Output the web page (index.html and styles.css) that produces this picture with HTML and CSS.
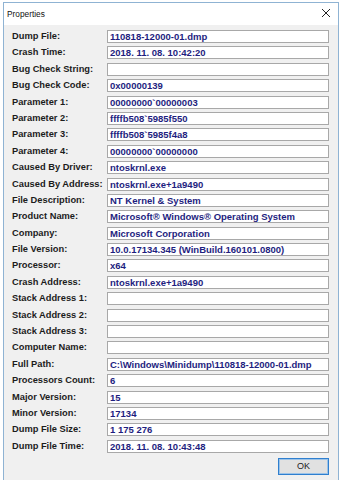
FILE: index.html
```html
<!DOCTYPE html>
<html>
<head>
<meta charset="utf-8">
<link rel="stylesheet" href="styles.css">
</head>
<body>
<div class="window">
  <div class="titlebar">
    <span class="title">Properties</span>
    <svg class="close" width="10" height="10" viewBox="0 0 10 10"><path d="M1 1 L9 9 M9 1 L1 9" stroke="#222" stroke-width="1" fill="none"/></svg>
  </div>
  <div class="content">
    <div class="grid">
      <div class="label">Dump File:</div><div class="field">110818-12000-01.dmp</div>
      <div class="label">Crash Time:</div><div class="field">2018. 11. 08. 10:42:20</div>
      <div class="label">Bug Check String:</div><div class="field"></div>
      <div class="label">Bug Check Code:</div><div class="field">0x00000139</div>
      <div class="label">Parameter 1:</div><div class="field">00000000`00000003</div>
      <div class="label">Parameter 2:</div><div class="field">ffffb508`5985f550</div>
      <div class="label">Parameter 3:</div><div class="field">ffffb508`5985f4a8</div>
      <div class="label">Parameter 4:</div><div class="field">00000000`00000000</div>
      <div class="label">Caused By Driver:</div><div class="field">ntoskrnl.exe</div>
      <div class="label">Caused By Address:</div><div class="field">ntoskrnl.exe+1a9490</div>
      <div class="label">File Description:</div><div class="field">NT Kernel &amp; System</div>
      <div class="label">Product Name:</div><div class="field">Microsoft® Windows® Operating System</div>
      <div class="label">Company:</div><div class="field">Microsoft Corporation</div>
      <div class="label">File Version:</div><div class="field">10.0.17134.345 (WinBuild.160101.0800)</div>
      <div class="label">Processor:</div><div class="field">x64</div>
      <div class="label">Crash Address:</div><div class="field">ntoskrnl.exe+1a9490</div>
      <div class="label">Stack Address 1:</div><div class="field"></div>
      <div class="label">Stack Address 2:</div><div class="field"></div>
      <div class="label">Stack Address 3:</div><div class="field"></div>
      <div class="label">Computer Name:</div><div class="field"></div>
      <div class="label">Full Path:</div><div class="field">C:\Windows\Minidump\110818-12000-01.dmp</div>
      <div class="label">Processors Count:</div><div class="field">6</div>
      <div class="label">Major Version:</div><div class="field">15</div>
      <div class="label">Minor Version:</div><div class="field">17134</div>
      <div class="label">Dump File Size:</div><div class="field">1 175 276</div>
      <div class="label">Dump File Time:</div><div class="field">2018. 11. 08. 10:43:48</div>
    </div>
    <div class="footer">
      <button class="ok">OK</button>
    </div>
  </div>
</div>
</body>
</html>
```
FILE: styles.css
```css
html, body {
  margin: 0;
  padding: 0;
}
body {
  background: #ffffff;
  width: 341px;
  height: 480px;
  overflow: hidden;
  font-family: "Liberation Sans", Arial, sans-serif;
}
.window {
  margin: 2px 0 0 3px;
  width: 334px;
  height: 490px;
  border: 1px solid #8fb3d3;
  background: #f0f0f0;
}
.titlebar {
  height: 22px;
  background: #ffffff;
  display: flex;
  align-items: center;
  justify-content: space-between;
  padding: 0 7px 0 3px;
}
.title {
  font-size: 8.3px;
  color: #111;
  margin-top: -1px;
}
.close {
  margin-top: -2px;
}
.content {
  padding: 5px 9px 0 8px;
}
.grid {
  display: grid;
  grid-template-columns: 95px 1fr;
  grid-auto-rows: 13px;
  row-gap: 3.4px;
}
.label {
  font-weight: bold;
  font-size: 9.3px;
  color: #1c1c1c;
  line-height: 13px;
  white-space: nowrap;
}
.field {
  background: #ffffff;
  border: 1px solid #a8a8a8;
  font-weight: bold;
  font-size: 9.5px;
  color: #1e1e80;
  line-height: 11px;
  padding-left: 2px;
  white-space: nowrap;
  overflow: hidden;
}
.footer {
  display: flex;
  justify-content: flex-end;
  margin-top: 5px;
}
.ok {
  width: 51px;
  height: 17px;
  background: #e1e1e1;
  border: 1px solid #2f7fcf;
  box-shadow: inset 0 0 0 1px #9cc3e8;
  font-family: "Liberation Sans", Arial, sans-serif;
  font-size: 9px;
  color: #222;
  padding: 0;
}
```
